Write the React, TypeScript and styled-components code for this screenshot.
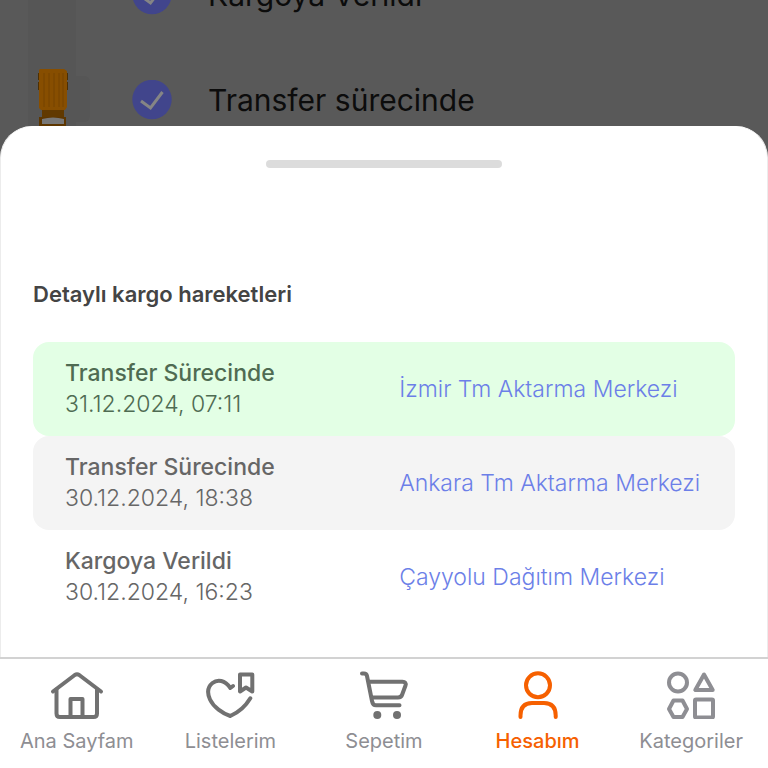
import React from "react";
import styled, { createGlobalStyle } from "styled-components";

const GlobalStyle = createGlobalStyle`
  *, *::before, *::after { box-sizing: border-box; }
  body {
    margin: 0;
    background: #595959;
    font-family: Inter, "Liberation Sans", sans-serif;
  }
  h2, p, ol, ul { margin: 0; padding: 0; }
  ol, ul { list-style: none; }
`;

const Page = styled.div`
  display: flex;
  flex-direction: column;
  height: 100vh;
  background: #595959;
`;

const Backdrop = styled.section`
  display: flex;
  flex: 1;
  min-height: 0;
  overflow: hidden;
  align-items: flex-end;
  padding-left: 28px;
`;

const Road = styled.div`
  display: flex;
  align-self: stretch;
  align-items: flex-end;
  justify-content: center;
  width: 48px;
  background: #565656;
`;

const Verge = styled.div`
  width: 14px;
  height: 46px;
  margin: 0 42px 4px 0;
  border-radius: 0 6px 6px 0;
  background: #565656;
`;

const Steps = styled.ol`
  display: flex;
  flex-direction: column;
  gap: 53px;
`;

const Step = styled.li`
  display: flex;
  align-items: center;
  gap: 36px;
  height: 52px;
  color: #0c0c0c;
  font-size: 30px;
  font-weight: 400;
  line-height: 40px;
`;

const Sheet = styled.main`
  display: flex;
  flex-direction: column;
  padding: 33px 32px;
  border: 1px solid #ececec;
  border-top-color: #ffffff;
  border-bottom: 0;
  border-radius: 32px 32px 0 0;
  background: #ffffff;
`;

const Handle = styled.div`
  align-self: center;
  width: 236px;
  height: 8px;
  margin-bottom: 110px;
  border-radius: 4px;
  background: #dcdcdc;
`;

const Title = styled.h2`
  margin-bottom: 32px;
  color: #444444;
  font-size: 22px;
  font-weight: 600;
  line-height: 32px;
`;

const tones = {
  green: { background: "#e3ffe5", color: "#4f6b52" },
  gray: { background: "#f4f4f4", color: "#666666" },
  plain: { background: "transparent", color: "#666666" },
};

const Movement = styled.li<{ $tone: keyof typeof tones }>`
  display: grid;
  grid-template-columns: 11fr 10fr;
  align-items: center;
  padding: 16px 32px;
  border-radius: 16px;
  background: ${(p) => tones[p.$tone].background};
  color: ${(p) => tones[p.$tone].color};
  font-size: 23px;
  line-height: 31px;
`;

const Status = styled.p`
  font-weight: 500;
`;

const Stamp = styled.p`
  font-weight: 350;
`;

const Place = styled.a`
  color: #6c7fe8;
  font-weight: 300;
  text-decoration: none;
  white-space: nowrap;
`;

const TabBar = styled.nav`
  display: flex;
  padding: 12px 0 15px;
  border-top: 2px solid #d2d2d2;
  background: #ffffff;
`;

const Tab = styled.a<{ $active?: boolean }>`
  display: flex;
  flex: 1 1 0;
  flex-direction: column;
  align-items: center;
  gap: 10px;
  color: ${(p) => (p.$active ? "#f66000" : "#8e8e93")};
  font-size: 20px;
  font-weight: ${(p) => (p.$active ? 500 : 400)};
  line-height: 24px;
  text-decoration: none;
`;

const TabIcon = styled.svg<{ $color: string }>`
  width: 54px;
  height: 48px;
  fill: none;
  stroke: ${(p) => p.$color};
  stroke-width: 4px;
  stroke-linecap: round;
  stroke-linejoin: round;
`;

const Check = () => (
  <svg width="40" height="40" viewBox="0 0 40 40" fill="none" aria-hidden="true">
    <circle cx="20" cy="19.5" r="19.7" fill="#41458c" />
    <path d="M9 21 18.500 28 30.500 12" stroke="#858585" strokeWidth="3" />
  </svg>
);

const Truck = () => (
  <svg width="32" height="58" viewBox="0 0 32 58" aria-hidden="true">
    <path d="M2 5h30v7H2zM2 14h30v8H2z" fill="#4b2f05" />
    <path d="M4 1h24l3 2v36l-2 3H5l-2-2V2z" fill="#874e00" />
    <path d="M8 5v34M13 5v34M18 5v34M23 5v34M27 5v34" stroke="#744300" />
    <path d="M6 42h22v7H6z" fill="#613900" />
    <path d="M3 49h27v9H3z" fill="#5d3600" />
    <path d="M6 51q11-3 22 0v5H6z" fill="#777777" />
  </svg>
);

const GRAY = "#717171";

const tabs = [
  {
    label: "Ana Sayfam",
    color: GRAY,
    art: (
      <>
        <path d="M3 20.5 24.8 4Q27 2.5 29.2 4L51 20.5" />
        <path d="M6.5 18.5v24Q6.5 46 10 46h33.500Q47 46 47 42.500v-24" />
        <path d="M20.500 45V28h12v17" />
      </>
    ),
  },
  {
    label: "Listelerim",
    color: GRAY,
    art: (
      <>
        <path d="M30 15 27.300 17C22 9 14.500 8 9.500 12C4 16.500 4.500 23 7 28.500C10.500 36 19.500 42.500 27.300 45C35.500 41.500 43 34.500 47.300 27.300" />
        <path d="M37 3.500h12.300v17L43 16.500l-6 4z" />
      </>
    ),
  },
  {
    label: "Sepetim",
    color: GRAY,
    art: (
      <>
        <path d="M5 2.500h2Q9.500 2.500 10 5l5 25Q15.800 34.300 19 34.300h23.500" />
        <path d="M12 10.700h33.500Q49.500 10.700 48.500 14.500l-3.300 9Q44.200 26.500 41 26.500H15" />
        <circle cx="20.300" cy="44" r="4" fill={GRAY} stroke="none" />
        <circle cx="40" cy="44" r="4" fill={GRAY} stroke="none" />
      </>
    ),
  },
  {
    label: "Hesabım",
    color: "#f66000",
    active: true,
    art: (
      <>
        <circle cx="27" cy="14.300" r="12" />
        <path d="M9.500 46v-1.500Q9.500 32 21 32h12Q44.700 32 44.700 44.500V46" />
      </>
    ),
  },
  {
    label: "Kategoriler",
    color: "#8e8e93",
    art: (
      <>
        <circle cx="14" cy="11.500" r="9" />
        <path d="M40 3.500 31.300 19h17.400z" />
        <path d="M9.500 29.500h9L23 38l-4.500 8h-9L5 38z" />
        <rect x="31" y="28.500" width="18" height="18" rx="1" />
      </>
    ),
  },
];

const movements: { status: string; time: string; place: string; tone: keyof typeof tones }[] = [
  { status: "Transfer Sürecinde", time: "31.12.2024, 07:11", place: "İzmir Tm Aktarma Merkezi", tone: "green" },
  { status: "Transfer Sürecinde", time: "30.12.2024, 18:38", place: "Ankara Tm Aktarma Merkezi", tone: "gray" },
  { status: "Kargoya Verildi", time: "30.12.2024, 16:23", place: "Çayyolu Dağıtım Merkezi", tone: "plain" },
];

export default function App() {
  return (
    <Page lang="tr">
      <GlobalStyle />
      <Backdrop>
        <Road>
          <Truck />
        </Road>
        <Verge />
        <Steps>
          {["Kargoya Verildi", "Transfer sürecinde"].map((step) => (
            <Step key={step}>
              <Check />
              {step}
            </Step>
          ))}
        </Steps>
      </Backdrop>
      <Sheet>
        <Handle />
        <Title>Detaylı kargo hareketleri</Title>
        <ul>
          {movements.map((m) => (
            <Movement key={m.time} $tone={m.tone}>
              <div>
                <Status>{m.status}</Status>
                <Stamp>{m.time}</Stamp>
              </div>
              <Place href="#">{m.place}</Place>
            </Movement>
          ))}
        </ul>
      </Sheet>
      <TabBar>
        {tabs.map((t) => (
          <Tab key={t.label} href="#" $active={t.active}>
            <TabIcon viewBox="0 0 54 48" $color={t.color} aria-hidden="true">
              {t.art}
            </TabIcon>
            {t.label}
          </Tab>
        ))}
      </TabBar>
    </Page>
  );
}
